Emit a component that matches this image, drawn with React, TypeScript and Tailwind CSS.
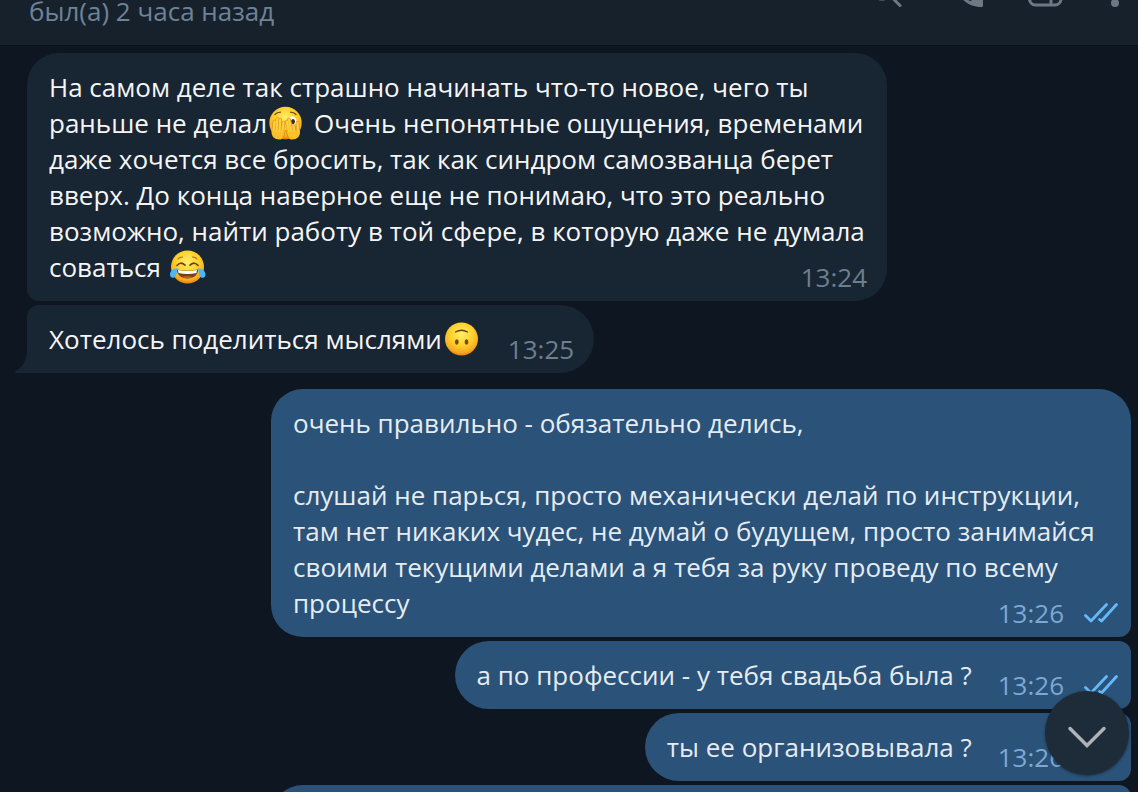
import type { ReactNode } from "react";
import clsx from "clsx";

function FaceGradient({ id }: { id: string }) {
    return (
        <defs>
            <radialGradient id={id} cx="0.5" cy="0.35" r="0.65">
                <stop offset="0" stopColor="#ffee6a" />
                <stop offset="0.55" stopColor="#fdd028" />
                <stop offset="0.85" stopColor="#f9a825" />
                <stop offset="1" stopColor="#e5830a" />
            </radialGradient>
        </defs>
    );
}

function Emoji({ label, children }: { label: string; children: ReactNode }) {
    return (
        <svg
            role="img"
            aria-label={label}
            viewBox="0 0 36 36"
            className="-my-1 mx-0.5 inline-block h-9 w-9 align-[-5px]"
        >
            {children}
        </svg>
    );
}

function PeekingEmoji() {
    return (
        <Emoji label="🫣">
            <FaceGradient id="face-peek" />
            <circle cx="16.500" cy="17" r="16.200" fill="url(#face-peek)" />
            <path d="M6 8.500q2-2.300 5.500-2.300M21.500 6.200q3.500 0 5.500 2.300" fill="none" stroke="#7a4a14" strokeWidth="1.300" strokeLinecap="round" />
            <ellipse cx="23.500" cy="15" rx="4" ry="4.600" fill="#fff" />
            <ellipse cx="24" cy="15.500" rx="2" ry="2.500" fill="#43270f" />
            {/* palms */}
            <path d="M2.500 24q1-4 5-5.500l6 1q3 3 2 7.500-.8 4.500-3.500 6.500-5 .5-8-2.500-2-3-1.500-7z" fill="#fcc02a" />
            <path d="M31 24q-1-4-5-5.500l-6 1q-3 3-2 7.500.8 4.500 3.500 6.500 5 .5 8-2.500 2-3 1.500-7z" fill="#fcc02a" />
            {/* fingers, outlines first */}
            <g fill="none" strokeLinecap="round">
                <path
                    d="M4.500 24L5.500 15.500M7.500 23L8.300 13M10.500 23L11.300 13.500M13.300 24L14.500 16.500M28.800 24L28.500 16.500M25.500 24L24.500 20M22.500 23L20 13.500M19.800 24L17.800 15.500"
                    stroke="#d98d1c"
                    strokeWidth="3.600"
                />
                <path
                    d="M4.500 25L5.500 15.500M7.500 25L8.300 13M10.500 25L11.300 13.500M13.300 25L14.500 16.500M28.800 25L28.500 16.500M25.500 25L24.500 20M22.500 25L20 13.500M19.800 25L17.800 15.500"
                    stroke="#ffd03a"
                    strokeWidth="2.400"
                />
            </g>
            <path d="M16.500 24q-1 5-3 9M17 24q1 5 3 9" fill="none" stroke="#d98d1c" strokeWidth=".9" />
        </Emoji>
    );
}

function JoyEmoji() {
    return (
        <Emoji label="😂">
            <FaceGradient id="face-joy" />
            <circle cx="17.500" cy="17" r="16.500" fill="url(#face-joy)" />
            <path d="M8 9q1.500-2 4.500-2M22.500 7q3 0 4.500 2" fill="none" stroke="#a86a14" strokeWidth="1.100" strokeLinecap="round" />
            <path d="M7 15.500q3.500-4.500 8-.3M20 15.200q4.500-4.200 8 .3" fill="none" stroke="#6b3f12" strokeWidth="1.600" strokeLinecap="round" />
            <path d="M7 19.500q10.500 2.500 21 0c.5 5-4.500 9-10.500 9S6.500 24.500 7 19.500z" fill="#7a3f16" />
            <path d="M8 20q9.500 2.200 19 0l-.5 3q-9 2-18 0z" fill="#fff" />
            <path d="M12 27q5.500-2 11 0-5.500 2.500-11 0z" fill="#c8572b" />
            <path d="M7.300 18C3 19 0 21 0 24.500c0 2.400 1.600 3.500 3.300 3.300C6.300 27.500 7 23 7.300 18z" fill="#4fb7f0" />
            <path d="M28.200 18c4.300 1 7.300 3 7.300 6.500 0 2.400-1.600 3.500-3.300 3.300-3-.3-3.700-4.800-4-9.800z" fill="#4fb7f0" />
        </Emoji>
    );
}

function UpsideDownEmoji() {
    return (
        <Emoji label="🙃">
            <FaceGradient id="face-upside" />
            <circle cx="17.500" cy="17" r="16.500" fill="url(#face-upside)" />
            <path d="M11.500 10q6-3.500 12 0" fill="none" stroke="#6b3f12" strokeWidth="1.400" strokeLinecap="round" />
            <ellipse cx="12.800" cy="20" rx="1.900" ry="2.700" fill="#7a4a14" />
            <ellipse cx="22.500" cy="20" rx="1.900" ry="2.700" fill="#7a4a14" />
        </Emoji>
    );
}

function ReadChecks() {
    return (
        <svg viewBox="0 0 34 20" className="h-5 w-[34px]" fill="none" stroke="#65b9f8" strokeWidth="2.800" strokeLinecap="round" strokeLinejoin="round">
            <path d="M1.500 12.500L7 18 22.500 1.500" />
            <path d="M15.500 16.500L17.500 18 32.500 1.500" />
        </svg>
    );
}

function Tail() {
    return (
        <svg viewBox="0 0 12 24" className="absolute bottom-0 -left-3 h-6 w-3" fill="#182533">
            <path d="M12 0v24H.8c-1 0-1-1.200-.2-1.700C8 18 12 11 12 0z" />
        </svg>
    );
}

type MessageProps = {
    time: string;
    out?: boolean;
    tail?: boolean;
    className?: string;
    children: ReactNode;
};

function Message({ time, out, tail, className, children }: MessageProps) {
    return (
        <article
            className={clsx(
                "relative max-w-[860px] pt-4 pb-[6px] pl-[22px]",
                out ? "self-end bg-[#2b5278] pr-[13px] text-[#e4ecf2]" : "self-start bg-[#182533] pr-5 text-[#f5f5f5]",
                className
            )}
        >
            <p className="flow-root whitespace-pre-line">
                {children}
                {/* floated so it shares the last line when there is room */}
                <span
                    className={clsx(
                        "float-right mt-[10px] ml-[26px] flex items-center gap-5",
                        out ? "text-[#7da8d3]" : "text-[#6d7f8f]"
                    )}
                >
                    <time>{time}</time>
                    {out && <ReadChecks />}
                </span>
            </p>
            {tail && <Tail />}
        </article>
    );
}

function ChatHeader() {
    return (
        <header className="flex h-[46px] shrink-0 items-start justify-between overflow-hidden border-b border-[#0a121a] bg-[#17212b] pr-px pl-[29px]">
            <p className="-mt-[7px] text-[#6d8398]">был(а) 2 часа назад</p>
            <div className="-mt-7 flex gap-7 text-[#6c7883]">
                <button aria-label="Поиск">
                    <svg viewBox="0 0 52 40" className="h-10 w-[52px]" fill="none" stroke="currentColor" strokeWidth="3" strokeLinecap="round">
                        <circle cx="13" cy="15.500" r="11.500" />
                        <path d="M21.500 24L31 33.500" />
                    </svg>
                </button>
                <button aria-label="Позвонить">
                    <svg viewBox="0 0 44 40" className="h-10 w-11" fill="currentColor">
                        <path
                            transform="translate(.4 1.400) scale(1.600)"
                            d="M6.620 10.790c1.440 2.830 3.760 5.140 6.590 6.590l2.200-2.200c.27-.27.67-.36 1.020-.24 1.120.37 2.330.57 3.570.57.55 0 1 .45 1 1V20c0 .55-.45 1-1 1C10.610 21 3 13.390 3 4c0-.55.45-1 1-1h3.500c.55 0 1 .45 1 1 0 1.250.2 2.450.57 3.570.11.35.03.74-.25 1.020z"
                        />
                    </svg>
                </button>
                <button aria-label="Информация">
                    <svg viewBox="0 0 44 40" className="h-10 w-11" fill="none" stroke="currentColor" strokeWidth="3">
                        <rect x="8.500" y="5" width="31.500" height="28" rx="6" />
                        <path d="M30 5v28" />
                    </svg>
                </button>
                <button aria-label="Меню">
                    <svg viewBox="0 0 44 40" className="h-10 w-11" fill="currentColor">
                        <circle cx="22" cy="7" r="4" />
                        <circle cx="22" cy="19" r="4" />
                        <circle cx="22" cy="31" r="4" />
                    </svg>
                </button>
            </div>
        </header>
    );
}

export default function App() {
    return (
        <div className="relative flex h-screen flex-col overflow-hidden bg-[#0e1621] font-['Open_Sans',sans-serif] text-[26px] leading-9">
            <ChatHeader />
            <main className="flex min-h-0 flex-1 flex-col gap-1 overflow-hidden pt-[7px] pr-[7px] pl-[27px] *:shrink-0">
                <Message time="13:24" className="rounded-[32px] rounded-bl-xl">
                    На самом деле так страшно начинать что-то новое, чего ты раньше не делал
                    <PeekingEmoji /> Очень непонятные ощущения, временами даже хочется все бросить, так как синдром
                    самозванца берет вверх. До конца наверное еще не понимаю, что это реально возможно, найти работу в
                    той сфере, в которую даже не думала соваться <JoyEmoji />
                </Message>
                <Message time="13:25" tail className="rounded-r-[34px] rounded-tl-xl">
                    Хотелось поделиться мыслями
                    <UpsideDownEmoji />
                </Message>
                <Message time="13:26" out className="mt-3 rounded-[32px] rounded-br-xl">
                    {"очень правильно - обязательно делись,\n\nслушай не парься, просто механически делай по инструкции, там нет никаких чудес, не думай о будущем, просто занимайся своими текущими делами а я тебя за руку проведу по всему процессу"}
                </Message>
                <Message time="13:26" out className="rounded-l-[34px] rounded-r-xl">
                    а по профессии - у тебя свадьба была ?
                </Message>
                <Message time="13:26" out className="rounded-l-[34px] rounded-r-xl">
                    ты ее организовывала ?
                </Message>
                <div className="h-[68px] w-[860px] max-w-full self-end rounded-l-[32px] rounded-r-xl bg-[#2b5278]" />
            </main>
            <button
                aria-label="Вниз"
                className="absolute right-[9px] bottom-[17px] flex size-[84px] items-center justify-center rounded-full bg-[#1e2b38] shadow-[0_1px_3px_rgba(0,0,0,0.4)]"
            >
                <svg viewBox="0 0 40 24" className="mt-2 h-6 w-10" fill="none" stroke="#adb3b8" strokeWidth="3.500" strokeLinecap="round">
                    <path d="M3 3.500L20 20.500 37 3.500" />
                </svg>
            </button>
        </div>
    );
}
